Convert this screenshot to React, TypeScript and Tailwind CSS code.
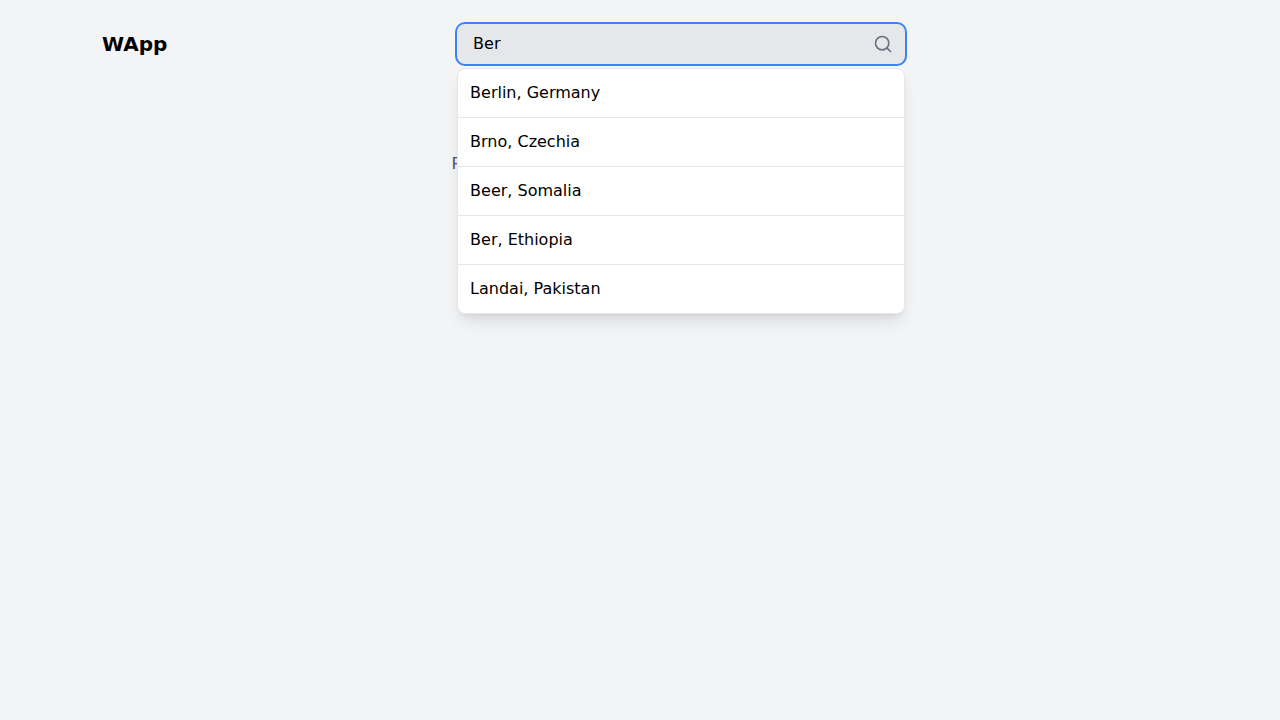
import { useState } from "react";
import { FiSearch } from "react-icons/fi";

const places = [
  "Berlin, Germany",
  "Brno, Czechia",
  "Beer, Somalia",
  "Ber, Ethiopia",
  "Landai, Pakistan",
];

export default function App() {
  const [query, setQuery] = useState("Ber");

  return (
    <div className="min-h-screen bg-[#f3f4f6] font-['DejaVu_Sans',sans-serif] text-base text-black">
      <header className="grid grid-cols-[33%_minmax(0,448px)] items-center px-[102px] py-6">
        <h1 className="text-xl font-bold">WApp</h1>
        <div className="relative">
          <input
            type="text"
            aria-label="Search for a city"
            value={query}
            onChange={(event) => setQuery(event.target.value)}
            className="block w-full rounded-lg bg-[#e5e7eb] py-2 pr-10 pl-4 leading-6 ring-2 ring-[#3b82f6] outline-none"
          />
          <button
            type="button"
            aria-label="Search"
            className="absolute inset-y-0 right-3 text-[#6b7280]"
          >
            <FiSearch className="size-5" />
          </button>
          <ul className="absolute inset-x-0 top-full z-10 mt-1 overflow-hidden rounded-lg border border-[#e5e7eb] bg-white shadow-lg">
            {places.map((place) => (
              <li key={place} className="border-b border-[#e5e7eb] last:border-b-0">
                <button
                  type="button"
                  onClick={() => setQuery(place)}
                  className="block w-full p-3 text-left hover:bg-gray-100"
                >
                  {place}
                </button>
              </li>
            ))}
          </ul>
        </div>
      </header>
      <main className="px-4 py-16">
        <p className="text-center text-[#4b5563]">
          Please search for a location to see the weather
        </p>
      </main>
    </div>
  );
}
